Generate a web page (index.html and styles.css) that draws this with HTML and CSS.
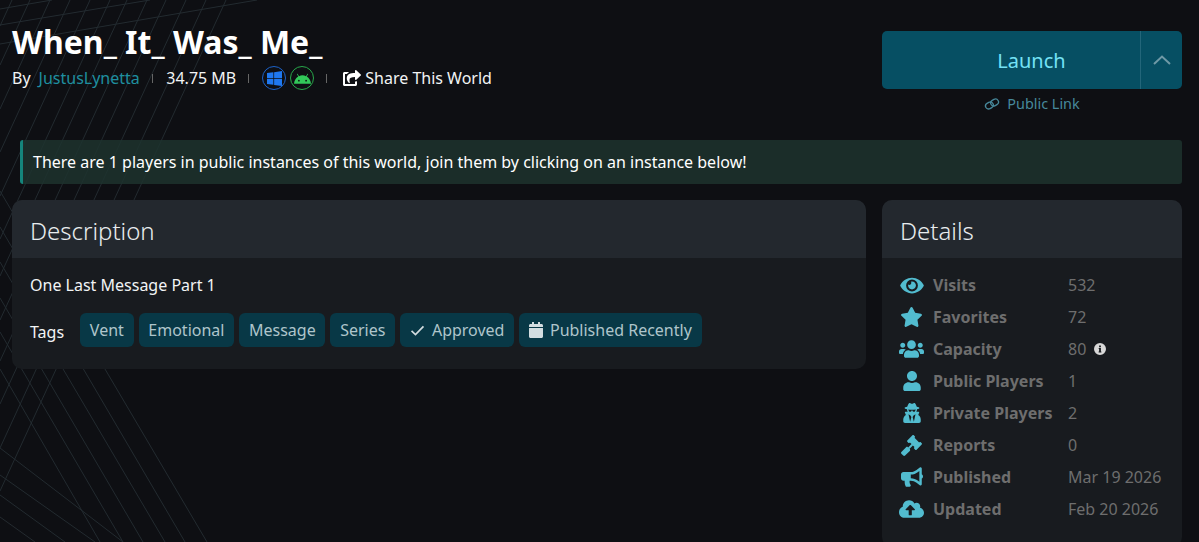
FILE: index.html
```html
<!DOCTYPE html>
<html lang="en">
<head>
    <meta charset="UTF-8">
    <title>When_ It_ Was_ Me_</title>
    <link rel="stylesheet" href="styles.css">
</head>
<body>

<svg class="backdrop" viewBox="0 0 1199 542" width="1199" height="542" aria-hidden="true">
    <g class="backdrop-lines">
        <path d="M12 0L0 26M30 0L0 65M50 0L0 109M70 0L0 152M90 0L0 196M110 0L0 239M127 0L0 276M147 0L0 320M166 0L0 361M186 0L0 404M206 0L0 448M226 0L0 491"/>
        <path d="M52 0L0 9M150 0L0 25M257 0L0 44"/>
        <path d="M0 191L207 542M0 227L185 542M0 262L165 542M0 298L143 542M0 332L123 542M0 369L100 542"/>
        <path d="M0 448L123 542M0 475L95 542M0 495L65 542M0 517L35 542"/>
    </g>
</svg>

<header class="top">
    <div class="world-info">
        <h1>When_ It_ Was_ Me_</h1>
        <div class="meta">
            <span>By</span>
            <a class="author" href="#">JustusLynetta</a>
            <span class="sep"></span>
            <span>34.75 MB</span>
            <span class="sep sep-wide"></span>
            <span class="platform platform-win">
                <svg viewBox="0 0 16 16" width="15" height="15"><path d="M0 2.2L6.8 1.3V7.6H0zM7.6 1.2L16 0V7.6H7.6zM0 8.4H6.8V14.7L0 13.8zM7.6 8.4H16V16L7.6 14.8z"/></svg>
            </span>
            <span class="platform platform-android">
                <svg viewBox="0 0 16 10" width="17" height="11"><path d="M0 10C.2 6.9 1.7 4.4 4 3.1L2.7.8 3.3.5 4.7 2.8C5.7 2.3 6.8 2 8 2s2.3.3 3.3.8L12.7.5l.6.3L12 3.1c2.3 1.3 3.8 3.8 4 6.9zM4.6 6.2a.8.8 0 1 0 0 1.6.8.8 0 0 0 0-1.6zm6.8 0a.8.8 0 1 0 0 1.6.8.8 0 0 0 0-1.6z" fill-rule="evenodd"/></svg>
            </span>
            <span class="sep sep-wide"></span>
            <a class="share" href="#">
                <svg viewBox="0 0 576 512" width="18" height="16"><path d="M568.482 177.448L424.479 313.433C409.3 327.768 384 317.14 384 295.985v-71.963c-144.575.97-205.566 35.113-164.775 171.353 4.483 14.973-12.846 26.567-25.006 17.33C155.252 383.105 120 326.488 120 269.339c0-143.937 117.599-172.5 264-173.312V24.012c0-21.174 25.317-31.768 40.479-17.448l144.003 135.988c10.02 9.463 10.028 25.425 0 34.896zM384 379.128V448H64V128h50.916a11.99 11.99 0 0 0 8.648-3.693c14.953-15.568 32.237-27.89 51.014-37.676C185.708 80.83 181.584 64 169.033 64H48C21.49 64 0 85.49 0 112v352c0 26.51 21.49 48 48 48h352c26.51 0 48-21.49 48-48v-88.806c0-8.288-8.197-14.066-16.011-11.302a71.83 71.83 0 0 1-34.189 3.377c-7.27-1.046-13.8 4.514-13.8 11.859z"/></svg>
                Share This World
            </a>
        </div>
    </div>
    <div class="launch">
        <div class="launch-btn">
            <span class="launch-label">Launch</span>
            <span class="launch-more">
                <svg viewBox="0 0 18 10" width="18" height="10"><path d="M1 9L9 1.5 17 9"/></svg>
            </span>
        </div>
        <a class="public-link" href="#">
            <svg viewBox="0 0 16 16" width="16" height="16"><g transform="rotate(-30 8 8)"><rect x="1" y="5" width="8" height="6" rx="3"/><rect x="7" y="5" width="8" height="6" rx="3"/></g></svg>
            Public Link
        </a>
    </div>
</header>

<div class="notice">There are 1 players in public instances of this world, join them by clicking on an instance below!</div>

<main class="columns">
    <section class="card">
        <h2 class="card-head">Description</h2>
        <div class="card-body">
            <p class="desc">One Last Message Part 1</p>
            <div class="tags">
                <span class="tags-label">Tags</span>
                <span class="tag">Vent</span>
                <span class="tag">Emotional</span>
                <span class="tag">Message</span>
                <span class="tag">Series</span>
                <span class="tag">
                    <svg class="tag-check" viewBox="0 0 16 12" width="15" height="11"><path d="M1.5 6.5L5.8 10.5 14.5 1.5"/></svg>
                    Approved
                </span>
                <span class="tag">
                    <svg viewBox="0 0 448 512" width="14" height="16"><path d="M12 192h424c6.6 0 12 5.4 12 12v260c0 26.5-21.5 48-48 48H48c-26.5 0-48-21.5-48-48V204c0-6.6 5.4-12 12-12zm436-44v-36c0-26.5-21.5-48-48-48h-48V12c0-6.6-5.4-12-12-12h-40c-6.6 0-12 5.4-12 12v52H160V12c0-6.6-5.4-12-12-12h-40c-6.6 0-12 5.4-12 12v52H48C21.5 64 0 85.5 0 112v36c0 6.6 5.4 12 12 12h424c6.6 0 12-5.4 12-12z"/></svg>
                    Published Recently
                </span>
            </div>
        </div>
    </section>

    <aside class="card">
        <h2 class="card-head">Details</h2>
        <div class="card-body stats">
            <div class="stat">
                <svg viewBox="0 0 576 512" width="24" height="21"><path d="M572.52 241.4C518.29 135.59 410.93 64 288 64S57.68 135.64 3.48 241.41a32.35 32.35 0 0 0 0 29.19C57.71 376.41 165.07 448 288 448s230.32-71.64 284.52-177.41a32.35 32.35 0 0 0 0-29.19zM288 400a144 144 0 1 1 144-144 143.93 143.93 0 0 1-144 144zm0-240a95.31 95.31 0 0 0-25.31 3.79 47.85 47.85 0 0 1-66.9 66.9A95.78 95.78 0 1 0 288 160z"/></svg>
                <b>Visits</b><span>532</span>
            </div>
            <div class="stat">
                <svg viewBox="0 0 576 512" width="23" height="20"><path d="M259.3 17.8L194 150.2 47.9 171.5c-26.2 3.8-36.7 36.1-17.7 54.6l105.7 103-25 145.5c-4.5 26.3 23.2 46 46.4 33.7L288 439.6l130.7 68.7c23.2 12.2 50.9-7.4 46.4-33.7l-25-145.5 105.7-103c19-18.5 8.5-50.8-17.7-54.6L382 150.2 316.7 17.8c-11.7-23.6-45.6-23.9-57.4 0z"/></svg>
                <b>Favorites</b><span>72</span>
            </div>
            <div class="stat">
                <svg viewBox="0 0 640 512" width="25" height="20"><path d="M96 224c35.3 0 64-28.7 64-64s-28.7-64-64-64-64 28.7-64 64 28.7 64 64 64zm448 0c35.3 0 64-28.7 64-64s-28.7-64-64-64-64 28.7-64 64 28.7 64 64 64zm32 32h-64c-17.6 0-33.5 7.1-45.1 18.6 40.3 22.1 68.9 62 75.1 109.4h66c17.7 0 32-14.3 32-32v-32c0-35.3-28.7-64-64-64zm-256 0c61.9 0 112-50.1 112-112S381.9 32 320 32 208 82.1 208 144s50.1 112 112 112zm76.8 32h-8.3c-20.8 10-43.9 16-68.5 16s-47.6-6-68.5-16h-8.3C179.6 288 128 339.6 128 403.2V432c0 26.5 21.5 48 48 48h288c26.5 0 48-21.5 48-48v-28.8c0-63.6-51.6-115.2-115.2-115.2zm-223.7-13.4C161.5 263.1 145.6 256 128 256H64c-35.3 0-64 28.7-64 64v32c0 17.7 14.3 32 32 32h65.9c6.3-47.4 34.9-87.3 75.2-109.4z"/></svg>
                <b>Capacity</b><span class="with-info">80
                    <svg class="info" viewBox="0 0 12 12" width="12" height="12"><path fill-rule="evenodd" d="M6 0a6 6 0 1 0 0 12A6 6 0 0 0 6 0zM5.1 2.6h1.8v1.6H5.1zM4.7 5.1h2.2v3.3h.5v1H4.6v-1h.5V6.1h-.4z"/></svg>
                </span>
            </div>
            <div class="stat">
                <svg viewBox="0 0 448 512" width="18" height="20"><path d="M224 256c70.7 0 128-57.3 128-128S294.7 0 224 0 96 57.3 96 128s57.3 128 128 128zm89.6 32h-16.7c-22.2 10.2-46.9 16-72.9 16s-50.6-5.8-72.9-16h-16.7C60.2 288 0 348.2 0 422.4V464c0 26.5 21.5 48 48 48h352c26.5 0 48-21.5 48-48v-41.6c0-74.2-60.2-134.4-134.4-134.4z"/></svg>
                <b>Public Players</b><span>1</span>
            </div>
            <div class="stat">
                <svg viewBox="0 0 448 512" width="18" height="20"><path d="M383.9 308.3l23.9-62.6c4-10.5-3.7-21.7-15-21.7h-58.5c11-18.9 17.8-40.6 17.8-64v-.3c39.2-7.8 64-19.1 64-31.7 0-13.3-27.3-25.1-70.1-33-9.2-32.8-27-65.8-40.6-82.8-9.5-11.9-25.9-15.6-39.5-8.8l-27.6 13.8c-9 4.5-19.6 4.5-28.6 0L182.1 3.4c-13.6-6.8-30-3.1-39.5 8.8-13.5 17-31.4 50-40.6 82.8-42.7 7.9-70 19.7-70 33 0 12.6 24.8 23.9 64 31.7v.3c0 23.4 6.8 45.1 17.8 64H56.3c-11.5 0-19.2 11.7-14.7 22.3l25.8 60.2C27.3 329.8 0 372.7 0 422.4v44.8C0 491.9 20.1 512 44.8 512h358.4c24.7 0 44.8-20.1 44.8-44.8v-44.8c0-48.4-25.8-90.4-64.1-114.1zM176 480l-41.6-192 49.6 32 24 40-32 120zm96 0l-32-120 24-40 49.6-32L272 480zm41.7-298.5c-3.9 11.9-7 24.6-16.5 33.4-10.1 9.3-48 22.4-64-25-2.8-8.4-15.4-8.4-18.3 0-17 50.2-56 32.4-64 25-9.5-8.8-12.7-21.5-16.5-33.4-.8-2.5-6.3-5.7-6.3-5.8v-10.8c28.3 3.6 61 5.8 96 5.8s67.7-2.1 96-5.8v10.8c-.1.1-5.6 3.2-6.4 5.8z"/></svg>
                <b>Private Players</b><span>2</span>
            </div>
            <div class="stat">
                <svg viewBox="0 0 512 512" width="21" height="21"><path d="M504.971 199.362l-22.627-22.627c-9.373-9.373-24.569-9.373-33.941 0l-5.657 5.657L329.608 69.255l5.657-5.657c9.373-9.373 9.373-24.569 0-33.941L312.638 7.029c-9.373-9.373-24.569-9.373-33.941 0L154.246 131.48c-9.373 9.373-9.373 24.569 0 33.941l22.627 22.627c9.373 9.373 24.569 9.373 33.941 0l5.657-5.657 39.598 39.598-81.04 81.04-5.657-5.657c-12.497-12.497-32.758-12.497-45.255 0L9.373 412.118c-12.497 12.497-12.497 32.758 0 45.255l45.255 45.255c12.497 12.497 32.758 12.497 45.255 0l114.745-114.745c12.497-12.497 12.497-32.758 0-45.255l-5.657-5.657 81.04-81.04 39.598 39.598-5.657 5.657c-9.373 9.373-9.373 24.569 0 33.941l22.627 22.627c9.373 9.373 24.569 9.373 33.941 0l124.451-124.451c9.372-9.372 9.372-24.568 0-33.941z"/></svg>
                <b>Reports</b><span>0</span>
            </div>
            <div class="stat">
                <svg viewBox="0 0 576 512" width="22" height="20"><path d="M576 240c0-23.63-12.95-44.04-32-55.12V32.01C544 23.26 537.02 0 512 0c-7.12 0-14.19 2.38-19.98 7.02l-85.03 68.03C364.28 109.19 310.66 128 256 128H64c-35.35 0-64 28.65-64 64v96c0 35.35 28.65 64 64 64h33.7c-1.39 10.48-2.18 21.14-2.18 32 0 39.77 9.26 77.35 25.56 110.94 5.19 10.69 16.52 17.06 28.4 17.06h74.28c26.05 0 41.69-29.84 25.9-50.56-16.4-21.52-26.15-48.36-26.15-77.44 0-11.11 1.62-21.79 4.41-32H256c54.66 0 108.28 18.81 150.98 52.95l85.03 68.03a32.023 32.023 0 0 0 19.98 7.02c24.92 0 32-22.78 32-32V295.13C563.05 284.04 576 263.63 576 240zm-96 141.42l-33.05-26.44C392.95 311.78 325.12 288 256 288v-96c69.12 0 136.95-23.78 190.95-66.98L480 98.58v282.84z"/></svg>
                <b>Published</b><span>Mar 19 2026</span>
            </div>
            <div class="stat">
                <svg viewBox="0 0 640 512" width="25" height="20"><path d="M537.6 226.6c4.1-10.7 6.4-22.4 6.4-34.6 0-53-43-96-96-96-19.7 0-38.1 6-53.3 16.2C367 64.2 315.3 32 256 32c-88.4 0-160 71.6-160 160 0 2.7.1 5.4.2 8.1C40.2 219.8 0 273.2 0 336c0 79.5 64.5 144 144 144h368c70.7 0 128-57.3 128-128 0-61.9-44-113.6-102.4-125.4zM393.4 288H328v112c0 8.8-7.2 16-16 16h-48c-8.8 0-16-7.2-16-16V288h-65.4c-14.3 0-21.4-17.2-11.3-27.3l105.4-105.4c6.2-6.2 16.4-6.2 22.6 0l105.4 105.4c10.1 10.1 2.9 27.3-11.3 27.3z"/></svg>
                <b>Updated</b><span>Feb 20 2026</span>
            </div>
        </div>
    </aside>
</main>

</body>
</html>
```

FILE: styles.css
```css
html {
    height: 542px;
    overflow: hidden;
}

body {
    margin: 0;
    padding: 0 17px 0 12px;
    font-family: 'Noto Sans', sans-serif;
    font-size: 16px;
    color: #f2f4f5;
    background-color: #0e0f13;
}

a {
    text-decoration: none;
    color: inherit;
}

.backdrop {
    position: absolute;
    top: 0;
    left: 0;
}

.backdrop-lines {
    fill: none;
    stroke: #232b30;
    stroke-width: 1;
}

.top,
.notice,
.columns {
    position: relative;
}

.top {
    display: flex;
    justify-content: space-between;
    height: 140px;
}

h1 {
    margin: 20px 0 0;
    font-size: 32px;
    line-height: 44px;
    font-weight: 700;
    color: #fff;
}

.meta {
    display: flex;
    align-items: center;
    margin-top: 2px;
    height: 24px;
}

.author {
    margin-left: 8px;
    color: #1f8fa0;
}

.sep {
    width: 1px;
    height: 9px;
    margin: 0 13px 0 12.5px;
    background-color: #666;
}

.sep-wide {
    margin: 0 13px 0 12px;
}

.platform {
    display: flex;
    align-items: center;
    justify-content: center;
    width: 24px;
    height: 24px;
    box-sizing: border-box;
    border-radius: 50%;
    border: 1px solid;
}

.platform-win {
    border-color: #1c62c9;
    fill: #1f78f0;
}

.platform-android {
    margin-left: 4px;
    border-color: #28a84a;
    fill: #32c859;
}

.share {
    display: flex;
    align-items: center;
    gap: 4px;
    margin-left: 3px;
    fill: #fff;
}

.launch {
    width: 300px;
    padding-top: 31px;
}

.launch-btn {
    display: flex;
    height: 58px;
    border-radius: 5px;
    background-color: #064f63;
}

.launch-label {
    flex: 1;
    align-self: center;
    padding-left: 41px;
    text-align: center;
    font-size: 20px;
    color: #74e2f5;
}

.launch-more {
    display: flex;
    align-items: center;
    justify-content: center;
    width: 41px;
    border-left: 1px solid #23667a;
}

.launch-more svg {
    fill: none;
    stroke: #6f99a6;
    stroke-width: 2;
}

.public-link {
    display: flex;
    align-items: center;
    justify-content: center;
    gap: 7px;
    margin-top: 4px;
    font-size: 14.4px;
    line-height: 22px;
    color: #47899c;
}

.public-link svg {
    fill: none;
    stroke: #47899c;
    stroke-width: 1.3;
}

.notice {
    margin-left: 8px;
    padding: 0 10px;
    height: 44px;
    line-height: 44px;
    border-left: 3px solid #15857b;
    border-radius: 3px;
    background-color: rgba(29, 50, 46, 0.85);
    color: #fff;
}

.columns {
    display: grid;
    grid-template-columns: 854px 300px;
    gap: 16px;
    align-items: start;
    margin-top: 16px;
}

.card {
    border-radius: 10px;
    overflow: hidden;
    background-color: #181b1f;
}

.card-head {
    margin: 0;
    padding: 0 18px;
    height: 58px;
    line-height: 62px;
    font-size: 24px;
    font-weight: 300;
    background-color: #23282e;
    color: #e9edef;
}

.card-body {
    padding: 16px 18px 22px;
}

.desc {
    margin: 0;
    line-height: 22px;
    color: #f2f4f5;
}

.tags {
    display: flex;
    align-items: center;
    gap: 5px;
    margin-top: 17px;
}

.tags-label {
    margin-right: 11px;
    padding-top: 4px;
}

.tag {
    display: flex;
    align-items: center;
    gap: 7px;
    height: 34px;
    padding: 0 9.75px;
    border-radius: 6px;
    background-color: #083846;
    color: #afc5cb;
    fill: #d3dde0;
}

.tag-check {
    fill: none;
    stroke: #d3dde0;
    stroke-width: 1.8;
}

.stats {
    padding-top: 11px;
}

.stat {
    display: grid;
    grid-template-columns: 33px 135px 1fr;
    align-items: center;
    height: 32px;
    color: #6e6e6e;
}

.stat svg {
    fill: #52bccf;
    justify-self: center;
    margin-right: 10px;
}

.stat b {
    font-weight: 700;
}

.with-info {
    display: flex;
    align-items: center;
    gap: 8px;
}

.stat .info {
    fill: #d8d8d8;
    margin: 0;
}
```
